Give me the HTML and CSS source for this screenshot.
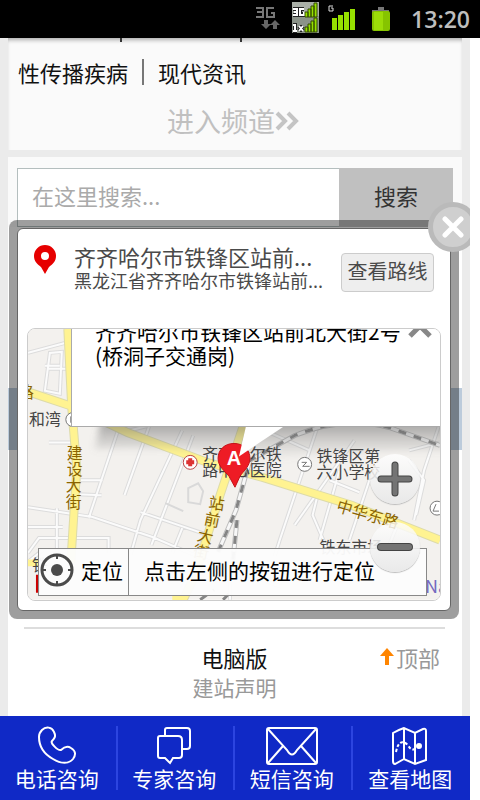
FILE: index.html
```html
<!DOCTYPE html>
<html lang="zh-CN">
<head>
    <meta charset="UTF-8">
    <meta name="viewport" content="width=device-width, initial-scale=1">
    <title>查看地图</title>
    <link rel="stylesheet" href="styles.css">
</head>
<body>
    <header class="status">
        <svg class="status-icons" width="156" height="38" viewBox="0 0 156 38" aria-hidden="true">
            <g fill="none" stroke="#777" stroke-width="2">
                <path d="M2 8h7v9h-7M3 12h6M20 8h-7v9h7v-4h-3"/>
            </g>
            <path d="M10 20h4v4h3l-5 5-5-5h3zM19 29h4v-4h3l-5-5-5 5h3z" fill="#666"/>
            <rect x="38" y="2" width="27" height="31" fill="#8b9389"/>
            <path d="M38 2h27v14h-27z" fill="#a9afa7"/>
            <g fill="none" stroke="#222" stroke-width="4"><path d="M39 9h4v6h-4M40 12h3M50 9h-4v6h4v-3M39 25h2v6M39 31h4M45 26l4 5M49 26l-4 5"/></g>
            <g fill="none" stroke="#fff" stroke-width="2"><path d="M39 9h4v6h-4M40 12h3M50 9h-4v6h4v-3M39 25h2v6M39 31h4M45 26l4 5M49 26l-4 5"/></g>
            <g fill="#96e000" stroke="#344c00" stroke-width="1">
                <path d="M51 12h3v5h-3zM54 9h3v8h-3zM57 6h3v11h-3zM60 3h3v14h-3zM51 27h3v5h-3zM54 24h3v8h-3zM57 21h3v11h-3zM60 18h3v14h-3z"/>
            </g>
            <path d="M79 6h-4v5h4v-3h-2" fill="none" stroke="#ddd"/>
            <path d="M78 18h5v12h-5zM84 15h5v15h-5zM90 12h5v18h-5zM96 9h5v21h-5z" fill="#96e000"/>
            <path d="M124 7h6v3h5v4h-17v-4h6z" fill="#777"/>
            <rect x="118" y="11" width="18" height="20" rx="2" fill="#86c400"/>
            <rect x="120" y="12" width="9" height="18" fill="#9cdc08"/>
        </svg>
        <time class="clock">13:20</time>
    </header>

    <main class="page">
        <section class="panel channel">
            <div class="ticks"><i></i><i></i></div>
            <div class="links">
                <a href="#">性传播疾病</a><span class="bar"></span><a href="#">现代资讯</a>
            </div>
            <a class="enter" href="#">进入频道<svg width="24" height="20" viewBox="0 0 24 20" aria-hidden="true"><path d="M2 2l8 8-8 8M13 2l8 8-8 8" fill="none" stroke="#c4c4c4" stroke-width="4"/></svg></a>
        </section>

        <section class="panel content">
            <form class="search">
                <input type="text" aria-label="搜索内容" placeholder="在这里搜索...">
                <button type="button">搜索</button>
            </form>
            <div class="band"></div>
            <footer class="foot">
                <div class="foot-links">
                    <a class="pc" href="#">电脑版</a>
                    <a class="about" href="#">建站声明</a>
                </div>
                <a class="top" href="#"><svg width="14" height="18" viewBox="0 0 14 18" aria-hidden="true"><path d="M7 0l7 8h-5v9h-4v-9h-5z" fill="#ff8500"/></svg>顶部</a>
            </footer>
        </section>

        <div class="dialog" role="dialog" aria-label="地图">
            <div class="dialog-body">
                <div class="place">
                    <svg class="pin" width="22" height="30" viewBox="0 0 22 30" aria-hidden="true"><path fill-rule="evenodd" d="M11 0a11 11 0 0 1 11 11c0 5-3 8-7 11l-4 7-4-7c-4-3-7-6-7-11a11 11 0 0 1 11-11zM11 7a4 4 0 1 0 0 8 4 4 0 0 0 0-8z" fill="#e60000"/></svg>
                    <div class="place-text">
                        <h1>齐齐哈尔市铁锋区站前...</h1>
                        <p>黑龙江省齐齐哈尔市铁锋站前...</p>
                    </div>
                    <button class="route" type="button">查看路线</button>
                </div>

                <div class="map">
                    <svg class="map-art" viewBox="27 328 414 272" preserveAspectRatio="xMinYMin slice">
                        <defs>
                            <linearGradient id="shade" x1="0" y1="0" x2="0" y2="1">
                                <stop offset="0" stop-color="#555" stop-opacity=".55"/>
                                <stop offset="1" stop-color="#999" stop-opacity="0"/>
                            </linearGradient>
                            <filter id="soft"><feGaussianBlur stdDeviation="4"/></filter>
                        </defs>
                        <rect x="27" y="328" width="414" height="272" fill="#f3f1ee"/>
                        <!-- side streets -->
                        <g fill="none" stroke="#dcdcdc" stroke-width="4">
                            <path id="streets" d="M27 352l41-11M49 352l-5 38 15 3 2-42zM44 365h15M47 368h20M27 507l65 10 60 20 70 30 60 20M48 442h25M118 428l-30 90M80 480h22M129 430l20-5-25 70M182 430l-42 90-10 35M193 435l-42 110M77 494l24 1M56 508v45M27 527h35M27 553l11-15h70v15M27 562l15-12M140 512l65 22-8 20M182 528l-10 25M300 480l-20 60-5 16M318 495l-5 20 15 35M355 440l-60 85M340 470l-20 70M370 480l-20 60M400 520l-12 30M410 460l15 20-8 35M440 425l-15 45-10 50M330 480l30 12M230 575v25M265 430l45 20M320 420l-20 60M410 450l31-8"/>
                        </g>
                        <g fill="none" stroke="#fbfbfb" stroke-width="2"><use href="#streets"/></g>
                        <g fill="none" stroke="#d9d9d9" stroke-width="2"><path d="M188 488l10-5 5 8-3 13-12-2zM165 503l18 8"/></g>
                        <!-- main roads -->
                        <g fill="none" stroke="#dddba9" stroke-width="9">
                            <path d="M67 328l4 80 5 60-6 95M27 391l45 15 55 26 80 30 55 15 90 28 89 35M245 420l-25 75-25 80-12 25"/>
                        </g>
                        <g fill="none" stroke="#fff391" stroke-width="7">
                            <path d="M67 328l4 80 5 60-6 95M27 391l45 15 55 26 80 30 55 15 90 28 89 35M245 420l-25 75-25 80-12 25M27 563h12M172 598h14"/>
                        </g>
                        <!-- railway -->
                        <g fill="none">
                            <path d="M218 552l18-42 14-50 45-25q50-20 95-8l51 18M237 520l-4 40" stroke="#bdbdbd" stroke-width="5"/>
                            <path d="M218 552l18-42 14-50 45-25q50-20 95-8l51 18M237 520l-4 40" stroke="#f7f7f7" stroke-width="3"/>
                            <path d="M218 552l18-42 14-50 45-25q50-20 95-8l51 18M237 520l-4 40M200 600l14-10M223 600l8-8" stroke="#858585" stroke-width="3" stroke-dasharray="8 8"/>
                        </g>
                        <!-- shadow of the info window -->
                        <path d="M100 420h350v30q-75 0-145 5l-56 6q-60-17-155-12z" fill="url(#shade)" filter="url(#soft)"/>

                        <g class="map-label">
                            <text x="28" y="424">和湾</text>
                            <text x="202" y="460">齐齐哈尔铁</text>
                            <text x="202" y="476">路中心医院</text>
                            <text x="317" y="462">铁锋区第</text>
                            <text x="317" y="478">六小学校</text>
                            <text x="320" y="553">铁东市场</text>
                            <text x="31" y="571">铁</text>
                        </g>
                        <g class="map-road">
                            <text x="66" y="459">建</text>
                            <text x="66" y="475">设</text>
                            <text x="65" y="491">大</text>
                            <text x="65" y="508">街</text>
                            <text x="208" y="508" transform="rotate(8 208 508)">站</text>
                            <text x="203" y="524" transform="rotate(12 203 524)">前</text>
                            <text x="196" y="540" transform="rotate(14 196 540)">大</text>
                            <text x="192" y="556" transform="rotate(12 192 556)">街</text>
                            <text x="336" y="511" transform="rotate(16 336 511)">中华东路</text>
                            <text x="17" y="397">路</text>
                        </g>
                        <text class="map-name" x="426" y="593">Na</text>
                        <g fill="#fff" stroke="#777">
                            <circle cx="72" cy="419" r="7"/><path d="M70 416h5v6h-5z"/>
                            <circle cx="305" cy="464" r="7"/><path d="M302 462h5l-4 4h7"/>
                            <circle cx="438" cy="508" r="7"/><path d="M437 504l-3 7h6"/>
                            <circle cx="190" cy="462" r="7" stroke="#b44"/>
                        </g>
                        <path d="M188 458h4v2h2v4h-2v2h-4v-2h-2v-4h2z" fill="#d33"/>
                        <path d="M35 575h4v18h-4z" fill="#c00"/>
                        <!-- marker A -->
                        <path d="M234 443c9 0 16 6 16 15 0 8-6 12-10 18l-5 11-6-11c-5-6-11-10-11-18 0-9 7-15 16-15z" fill="#ee1c25" stroke="#c51118"/>
                        <text class="map-marker" x="234" y="465">A</text>
                        <path d="M246 426h38l-45 30z" fill="#fff"/>
                    </svg>

                    <div class="info">
                        <p>齐齐哈尔市铁锋区站前北大街2号 (桥洞子交通岗)</p>
                        <button type="button" aria-label="关闭信息窗口"><svg width="24" height="24" viewBox="0 0 24 24"><path d="M2 2l20 20M22 2L2 22" stroke="#888" stroke-width="5"/></svg></button>
                    </div>

                    <div class="locate">
                        <button type="button">
                            <svg width="34" height="34" viewBox="0 0 34 34" aria-hidden="true"><circle cx="17" cy="17" r="15" fill="none" stroke="#4b4b4b" stroke-width="3"/><circle cx="17" cy="17" r="6" fill="#4b4b4b"/><path d="M17 2v4M17 28v4M2 17h4M28 17h4" stroke="#4b4b4b" stroke-width="2"/></svg>定位</button>
                        <p>点击左侧的按钮进行定位</p>
                    </div>

                    <div class="zoom">
                        <button type="button" aria-label="放大"><svg width="36" height="36" viewBox="0 0 36 36"><path d="M18 4v28M4 18h28" stroke="#444" stroke-width="7" stroke-linecap="round"/><path d="M18 4v28M4 18h28" stroke="#747474" stroke-width="5" stroke-linecap="round"/></svg></button>
                        <button type="button" aria-label="缩小"><svg width="36" height="36" viewBox="0 0 36 36"><path d="M4 18h28" stroke="#444" stroke-width="8" stroke-linecap="round"/><path d="M4 18h28" stroke="#747474" stroke-width="6" stroke-linecap="round"/></svg></button>
                    </div>
                </div>
            </div>
            <button class="close" type="button" aria-label="关闭"><svg width="22" height="22" viewBox="0 0 22 22"><path d="M3 3l16 16M19 3L3 19" stroke="#fff" stroke-width="5" stroke-linecap="round"/></svg></button>
        </div>
    </main>

    <nav class="tabs">
        <a href="#">
            <svg width="40" height="40" viewBox="0 0 40 40" aria-hidden="true"><path d="M5 4c4-4 10-3 12 2 2 4 1 6-2 9-2 2 6 10 9 9 3-3 7-4 10-2 5 3 5 7 2 11-4 5-12 5-20 0C7 28 2 20 2 11c0-3 1-5 3-7z"/></svg>
            电话咨询
        </a>
        <a href="#">
            <svg width="40" height="40" viewBox="0 0 40 40" aria-hidden="true"><path d="M11 10V4q0-2 2-2h20q3 0 3 3v15q0 3-3 3h-4M6 10h18q4 0 4 4v15q0 3-3 3h-6l-3 5-5-5H6q-2 0-2-2V12q0-2 2-2z"/></svg>
            专家咨询
        </a>
        <a href="#">
            <svg width="52" height="40" viewBox="0 0 52 40" aria-hidden="true"><rect x="1" y="2" width="50" height="36" rx="2"/><path d="M2 3l19 21q5 9 10 0L50 3M2 37l15-17M50 37L35 20"/></svg>
            短信咨询
        </a>
        <a href="#">
            <svg width="40" height="40" viewBox="0 0 40 40" aria-hidden="true"><path d="M3 7q5-3 11-5l11 5 8-4q3-1 3 2v29l-11 4-11-5-9 5q-2 0-2-3zM14 2v31M25 7v31"/><path d="M6 26q3-15 12-7 3 6 7 4" stroke-dasharray="3 2"/><circle cx="29" cy="20" r="2" fill="#fff"/></svg>
            查看地图
        </a>
    </nav>
</body>
</html>
```

FILE: styles.css
```css
* {
    box-sizing: border-box;
}

body {
    margin: 0;
    min-height: 100vh;
    display: flex;
    flex-direction: column;
    background: #fff;
    color: #111;
    font-family: "Noto Sans CJK SC", sans-serif;
    font-size: 22px;
    line-height: 32px;
}

a {
    color: inherit;
    text-decoration: none;
}

p, h1 {
    margin: 0;
    font-weight: normal;
}

button {
    padding: 0;
    border: none;
    background: none;
    color: inherit;
    font: inherit;
}

svg {
    flex: none;
}

/* status bar */
.status {
    display: flex;
    justify-content: flex-end;
    align-items: center;
    height: 38px;
    padding-right: 10px;
    background: #000;
}

.clock {
    width: 60px;
    color: #bebebe;
    font-family: "Open Sans", sans-serif;
    font-weight: 600;
    font-size: 23px;
    text-align: right;
}

/* page */
.page {
    position: relative;
    overflow: hidden;
    flex: 1;
    display: flex;
    flex-direction: column;
    gap: 7px;
    margin-right: 10px;
    padding: 0 8px;
    background: #ebebeb;
}

.panel {
    background: #fafafa;
}

.channel {
    height: 112px;
    box-shadow: inset 0 4px 4px -2px #aaa;
}

.ticks {
    display: flex;
    gap: 118px;
    height: 18px;
    padding-left: 112px;
}

.ticks i {
    width: 2px;
    height: 4px;
    background: #333;
}

.links {
    display: flex;
    align-items: center;
    padding-left: 10px;
}

.bar {
    width: 2px;
    height: 26px;
    margin: 0 14px;
    background: #777;
}

.enter {
    display: flex;
    align-items: center;
    justify-content: center;
    margin-top: 17px;
    padding-right: 4px;
    color: #c0c0c0;
    font-size: 27px;
}

.content {
    flex: 1;
    display: flex;
    flex-direction: column;
    background: linear-gradient(#fafafa 70px, #fff 70px);
}

.search {
    display: flex;
    height: 70px;
    padding: 11px 9px 0;
}

.search input {
    flex: 1;
    min-width: 0;
    padding: 0 14px;
    border: 1px solid #b4bebe;
    border-right: none;
    border-radius: 0;
    background: #fff;
    font: inherit;
}

.search input::placeholder {
    color: #aaa;
}

.search button {
    width: 114px;
    background: #c0c0c0;
    color: #333;
}

.search input, .search button {
    padding-bottom: 6px;
}

.band {
    height: 62px;
    margin-top: 161px;
    background: #bccbdb;
}

.foot {
    display: grid;
    grid-template-columns: 1fr auto 1fr;
    margin: 177px 17px 0 16px;
    padding-top: 12px;
    border-top: 2px solid #ddd;
}

.foot-links {
    grid-column: 2;
    display: flex;
    flex-direction: column;
    align-items: center;
}

.about {
    color: #999;
    font-size: 21px;
    line-height: 28px;
}

.top {
    justify-self: end;
    display: flex;
    align-items: center;
    gap: 2px;
    height: 32px;
    padding-right: 5px;
    color: #999;
}

/* map dialog, lies over the page */
.dialog {
    position: absolute;
    top: 182px;
    left: 9px;
    right: 11px;
    padding: 8px;
    border-radius: 8px;
    background: rgba(0, 0, 0, .38);
}

.dialog-body {
    padding: 16px 9px 9px;
    border: 1px solid #666;
    border-radius: 6px;
    background: #fff;
}

.place {
    display: flex;
    height: 83px;
    padding: 0 7px;
    color: #4a4a4a;
}

.place-text {
    flex: 1;
    min-width: 0;
    padding-left: 18px;
    white-space: nowrap;
}

.place-text h1 {
    font-size: 22px;
    line-height: 22px;
}

.place-text p {
    font-size: 18px;
    line-height: 26px;
}

.route {
    width: 93px;
    height: 39px;
    margin-top: 8px;
    padding-bottom: 4px;
    border: 1px solid #ccc;
    border-radius: 4px;
    background: #eee;
    font-size: 20px;
}

.map {
    position: relative;
    overflow: hidden;
    border: 1px solid #ccc;
    border-radius: 8px;
}

.map-art {
    display: block;
    width: 100%;
    height: auto;
}

.map-label {
    fill: #444;
    font-size: 16px;
}

.map-road {
    fill: #8a6400;
    font-size: 16px;
}

.map-name {
    fill: #7468c0;
    font-size: 18px;
}

.map-marker {
    fill: #fff;
    font-family: "Liberation Sans", sans-serif;
    font-weight: bold;
    font-size: 20px;
    text-anchor: middle;
}

.info {
    position: absolute;
    top: -20px;
    left: 43px;
    right: 0;
    height: 118px;
    display: flex;
    border: 1px solid #aaa;
    border-right: none;
    background: #fff;
    color: #000;
    font-size: 21px;
    line-height: 24px;
}

.info p {
    flex: 1;
    padding: 9px 0 0 23px;
}

.info button {
    width: 24px;
    height: 24px;
    margin: 4px 8px 0 4px;
}

/* the tail of the window is part of the map drawing */
.locate {
    position: absolute;
    left: 10px;
    right: 13px;
    bottom: 4px;
    display: flex;
    align-items: center;
    height: 48px;
    border: 1px solid #888;
    background: rgba(252, 252, 252, .96);
    color: #000;
    font-size: 21px;
}

.locate button {
    display: flex;
    align-items: center;
    gap: 7px;
    height: 100%;
    padding: 0 5px 4px 1px;
    border-right: 1px solid #888;
}

.locate p {
    padding: 0 0 4px 15px;
}

.zoom {
    position: absolute;
    right: 20px;
    bottom: 28px;
    display: flex;
    flex-direction: column;
    gap: 18px;
}

.zoom button {
    display: flex;
    align-items: center;
    justify-content: center;
    width: 50px;
    height: 50px;
    border-radius: 50%;
    background: linear-gradient(rgba(255, 255, 255, .8), rgba(232, 232, 232, .95));
    box-shadow: 0 1px 1px #bbb;
}

.close {
    position: absolute;
    top: -18px;
    right: -19px;
    display: flex;
    align-items: center;
    justify-content: center;
    width: 50px;
    height: 50px;
    border: 5px solid #bababa;
    border-radius: 50%;
    background: #cfcfcf;
}

/* bottom bar */
.tabs {
    display: grid;
    grid-template-columns: repeat(4, 1fr);
    margin-right: 10px;
    height: 84px;
    padding: 10px 0;
    background: #1029c6;
    color: #fff;
    font-size: 21px;
    line-height: 24px;
}

.tabs a {
    display: flex;
    flex-direction: column;
    align-items: center;
    padding-right: 2px;
    border-right: 2px solid #2c45e0;
}

.tabs a:last-child {
    border-right: none;
}

.tabs svg {
    fill: none;
    stroke: #fff;
    stroke-width: 2;
}
```
